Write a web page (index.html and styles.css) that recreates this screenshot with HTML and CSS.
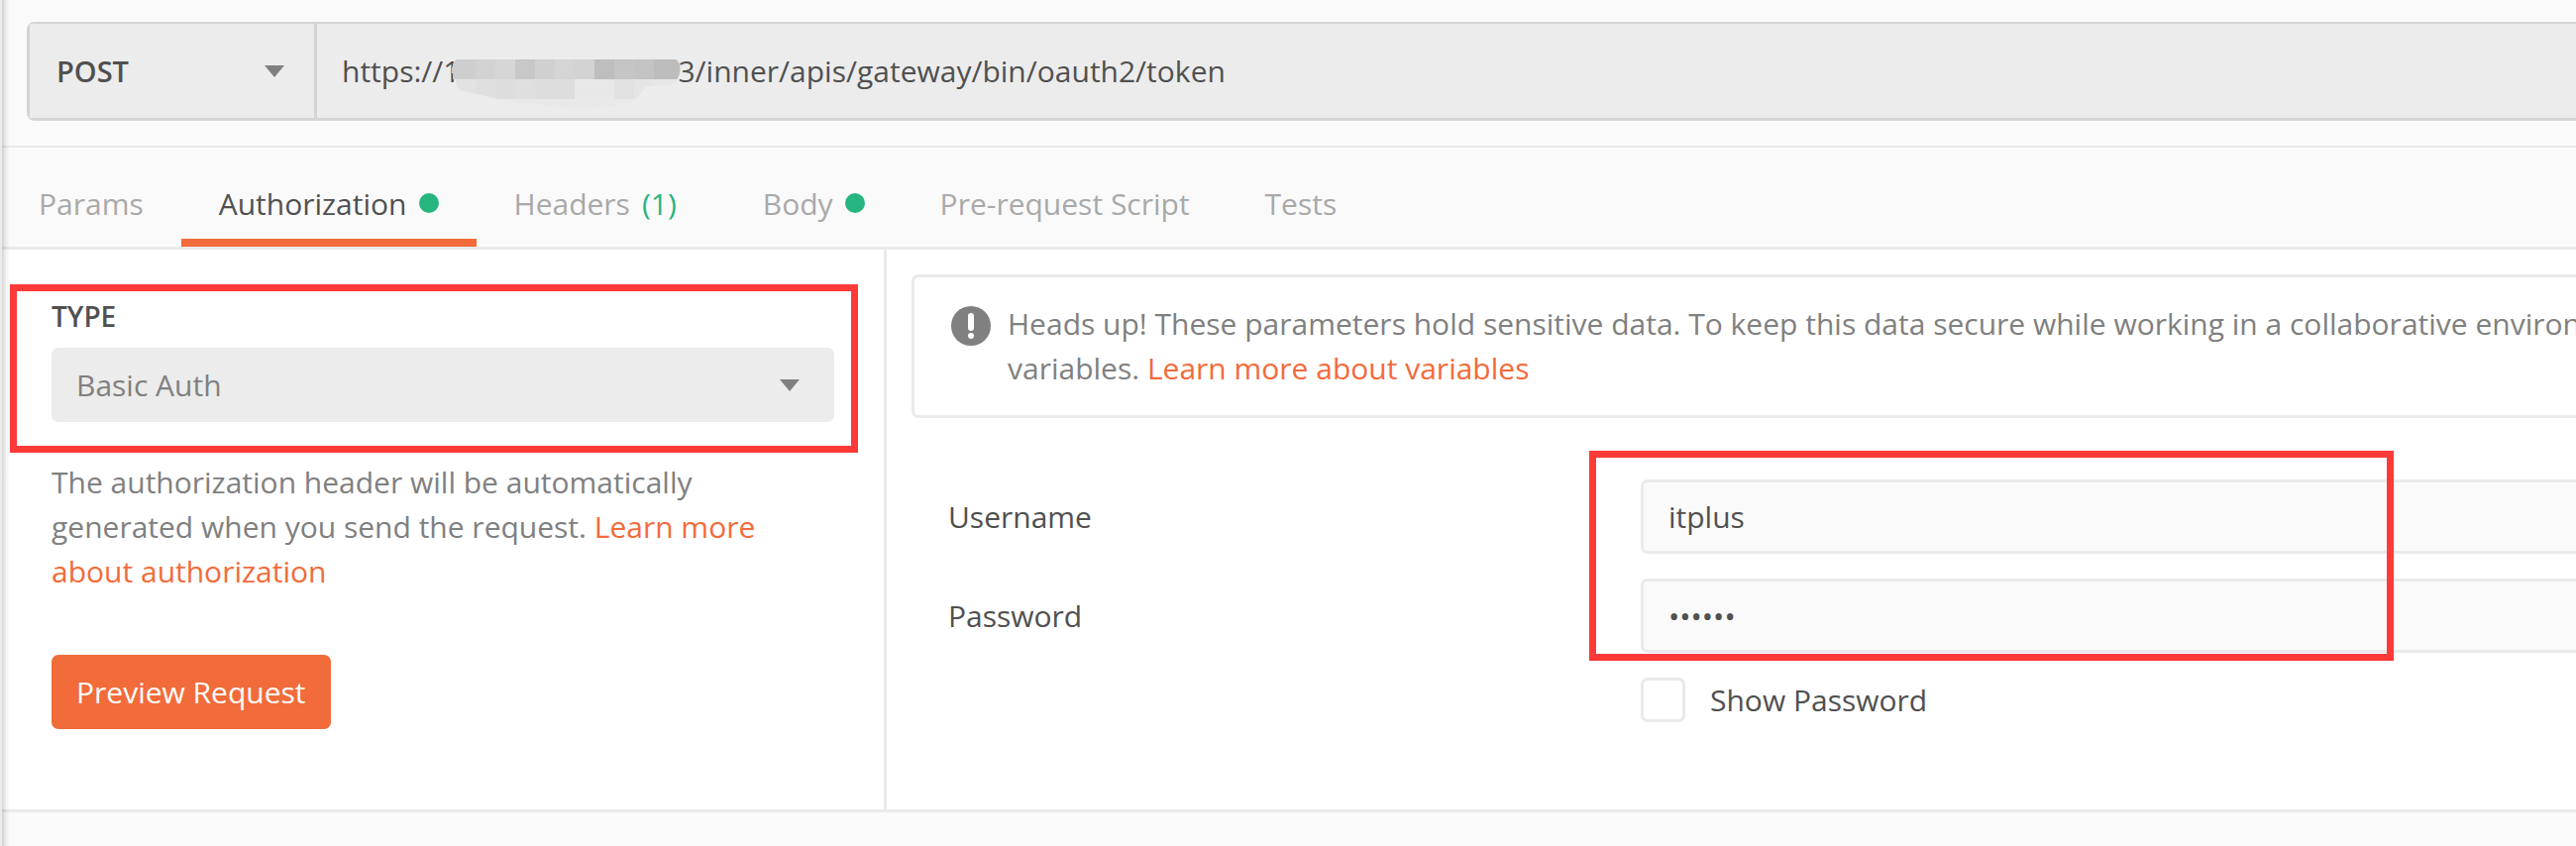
FILE: index.html
```html
<!DOCTYPE html>
<html lang="en">
<head>
<meta charset="utf-8">
<title>Request builder</title>
<link rel="stylesheet" href="styles.css">
</head>
<body>
<main class="workspace">
  <form class="url-bar">
    <div class="picker method">
      <select class="picker-select" aria-label="HTTP method"><option>POST</option></select>
      <svg class="caret" viewBox="0 0 20 12" aria-hidden="true"><path d="M0 0H20L10 12Z"/></svg>
    </div>
    <div class="url">
      <input class="url-input" type="text" aria-label="Request URL" value="https://1&emsp;&emsp;&emsp;&emsp;&emsp;&emsp;&emsp;&emsp13;3/inner/apis/gateway/bin/oauth2/token">
      <svg class="mosaic" viewBox="168 90 693 150" aria-hidden="true">
        <clipPath id="smudge"><path d="M182 90H846Q858 98 860 120Q856 150 840 162Q815 172 755 171Q735 205 715 215Q640 238 560 240Q490 240 440 225Q350 222 300 208L200 185Q180 178 180 150H172V132H168Q168 100 182 90Z"/></clipPath>
        <g clip-path="url(#smudge)" shape-rendering="crispEdges">
          <rect x="168" y="90" width="693" height="150" fill="#e9e9e9"/>
          <rect x="168" y="90" width="72" height="60" fill="#cecece"/>
          <rect x="240" y="90" width="60" height="60" fill="#d2d2d2"/>
          <rect x="300" y="90" width="60" height="60" fill="#d6d6d6"/>
          <rect x="360" y="90" width="60" height="60" fill="#c8c8c8"/>
          <rect x="420" y="90" width="60" height="60" fill="#d0d0d0"/>
          <rect x="480" y="90" width="60" height="60" fill="#d5d5d5"/>
          <rect x="540" y="90" width="60" height="60" fill="#d2d2d2"/>
          <rect x="600" y="90" width="60" height="60" fill="#bebebe"/>
          <rect x="660" y="90" width="60" height="60" fill="#c5c5c5"/>
          <rect x="720" y="90" width="60" height="60" fill="#c3c3c3"/>
          <rect x="780" y="90" width="81" height="60" fill="#bdbdbd"/>
          <rect x="168" y="150" width="72" height="60" fill="#e2e2e2"/>
          <rect x="240" y="150" width="60" height="60" fill="#dfdfdf"/>
          <rect x="300" y="150" width="60" height="60" fill="#dddddd"/>
          <rect x="360" y="150" width="60" height="60" fill="#dfdfdf"/>
          <rect x="420" y="150" width="120" height="60" fill="#dddddd"/>
          <rect x="540" y="150" width="120" height="60" fill="#e8e8e8"/>
          <rect x="660" y="150" width="60" height="60" fill="#e1e1e1"/>
          <rect x="720" y="150" width="60" height="60" fill="#e5e5e5"/>
          <rect x="780" y="150" width="81" height="60" fill="#e7e7e7"/>
        </g>
      </svg>
    </div>
  </form>

  <nav class="tabs">
    <a class="tab" href="#params">Params</a>
    <a class="tab tab-active" href="#authorization">Authorization <span class="dot"></span></a>
    <a class="tab tab-counted" href="#headers">Headers <span class="count">(1)</span></a>
    <a class="tab" href="#body">Body <span class="dot"></span></a>
    <a class="tab" href="#scripts">Pre-request Script</a>
    <a class="tab" href="#tests">Tests</a>
  </nav>

  <section class="panels">
    <div class="auth-type">
      <label class="type-label" for="auth-type">TYPE</label>
      <div class="picker type">
        <select class="picker-select" id="auth-type"><option>Basic Auth</option></select>
        <svg class="caret" viewBox="0 0 20 12" aria-hidden="true"><path d="M0 0H20L10 12Z"/></svg>
      </div>
      <p class="help">The authorization header will be automatically generated when you send the request. <a class="link" href="#learn-auth">Learn more about authorization</a></p>
      <button class="preview" type="button">Preview Request</button>
      <div class="marker marker-type"></div>
    </div>

    <div class="auth-form">
      <div class="notice">
        <svg class="notice-icon" viewBox="0 0 40 40" aria-hidden="true">
          <circle cx="20" cy="20" r="20" fill="#808080"/>
          <rect x="17" y="7" width="6" height="18" rx="3" fill="#fff"/>
          <circle cx="20" cy="30" r="3" fill="#fff"/>
        </svg>
        <p class="notice-text">Heads up! These parameters hold sensitive data. To keep this data secure while working in a collaborative environment<br>variables. <a class="link" href="#learn-variables">Learn more about variables</a></p>
      </div>
      <form class="fields">
        <label class="field-label" for="username">Username</label>
        <input class="field" id="username" type="text" value="itplus">
        <label class="field-label" for="password">Password</label>
        <input class="field" id="password" type="password" value="secret">
        <div class="show">
          <input class="check" id="show-password" type="checkbox">
          <label for="show-password">Show Password</label>
        </div>
        <div class="marker marker-fields"></div>
      </form>
    </div>
  </section>
</main>
<div class="edge"></div>
</body>
</html>
```
FILE: styles.css
```css
* {
  box-sizing: border-box;
}

body {
  margin: 0;
  overflow: hidden;
  background: #fafafa;
  color: #505050;
  font: 30px/45px "Open Sans", "Noto Sans", sans-serif;
}

p {
  margin: 0;
}

input,
select,
button {
  margin: 0;
  font: inherit;
  color: inherit;
}

.link {
  color: #f26b3a;
  text-decoration: none;
}

/* The request pane runs on beyond the right edge of the window. */
.workspace {
  width: calc(100% + 200px);
}

.edge {
  position: absolute;
  inset: 0 auto 0 0;
  width: 10px;
  background: linear-gradient(to right, rgba(0, 0, 0, 0.16), rgba(0, 0, 0, 0.04) 60%, transparent);
  border-left: 2px solid #ebebeb;
  background-clip: padding-box;
}

/* URL bar */
.url-bar {
  display: flex;
  height: 100px;
  margin: 22px 0 25px 27px;
  border: 3px solid #d4d4d4;
  border-top-width: 2px;
  border-radius: 8px;
  background: #ececec;
}

.picker {
  display: grid;
  align-items: center;
  background: #ececec;
}

.picker-select {
  grid-area: 1 / 1;
  width: 100%;
  height: 100%;
  appearance: none;
  border: 0;
  border-radius: 7px;
  background: none;
}

.caret {
  grid-area: 1 / 1;
  justify-self: end;
  width: 20px;
  height: 12px;
  fill: #808080;
  pointer-events: none;
}

.method {
  width: 290px;
  padding-right: 30px;
  border-right: 3px solid #d4d4d4;
}

.method .picker-select {
  padding: 0 27px;
  font-size: 29px;
  font-weight: 600;
}

.url {
  position: relative;
  flex: 1;
}

.url-input {
  width: 100%;
  height: 100%;
  padding: 0 25px;
  border: 0;
  background: none;
}

.mosaic {
  position: absolute;
  left: 136px;
  top: 36px;
  width: 231px;
  height: 50px;
}

/* Tabs */
.tabs {
  display: flex;
  height: 105px;
  padding-left: 1px;
  border-top: 2px solid #eaeaea;
  border-bottom: 3px solid #eaeaea;
}

.tab {
  display: flex;
  align-items: center;
  gap: 12px;
  padding: 20px 38px 0;
  border-bottom: 8px solid transparent;
  color: #a9a9a9;
  text-decoration: none;
}

.tab-active {
  border-color: #f26b3a;
  color: #505050;
}

.tab-counted {
  padding-right: 49px;
}

.count {
  color: #26b47f;
}

.dot {
  width: 20px;
  height: 20px;
  border-radius: 50%;
  background: #26b47f;
}

/* Panels */
.panels {
  display: flex;
  height: 568px;
  background: #fff;
  border-bottom: 3px solid #eaeaea;
}

.auth-type {
  position: relative;
  width: 895px;
  padding: 45px 50px 0 52px;
  border-right: 3px solid #eaeaea;
}

.type-label {
  display: block;
  margin-bottom: 9px;
  font-size: 28px;
  font-weight: 600;
}

.type {
  height: 75px;
  padding-right: 35px;
  border-radius: 7px;
  color: #808080;
}

.type .picker-select {
  padding: 0 25px;
}

.help {
  width: 740px;
  margin: 38px 0 62px;
  color: #808080;
}

.preview {
  height: 75px;
  padding: 0 25px;
  border: 0;
  border-radius: 7px;
  background: #f26b3a;
  color: #fff;
}

.auth-form {
  flex: 1;
  padding: 25px 25px 0;
}

.notice {
  display: flex;
  gap: 17px;
  height: 145px;
  padding: 24px 37px;
  border: 3px solid #eaeaea;
  border-radius: 7px;
  color: #808080;
}

.notice-icon {
  flex: none;
  width: 40px;
  height: 40px;
  margin-top: 5px;
}

.notice-text {
  white-space: nowrap;
}

.fields {
  position: relative;
  display: grid;
  grid-template-columns: 699px 1fr;
  row-gap: 25px;
  align-items: center;
  margin-top: 62px;
  padding-left: 37px;
}

.field {
  width: 100%;
  height: 75px;
  padding: 0 25px;
  border: 3px solid #eaeaea;
  border-radius: 7px;
  background: #fafafa;
}

.show {
  grid-column: 2;
  display: flex;
  align-items: center;
  gap: 25px;
}

.check {
  width: 45px;
  height: 45px;
  appearance: none;
  border: 3px solid #eaeaea;
  border-radius: 7px;
  background: #fff;
}

/* Red highlight frames drawn over the panels */
.marker {
  position: absolute;
  border: 7px solid #fc3a38;
  pointer-events: none;
}

.marker-type {
  left: 10px;
  top: 35px;
  width: 856px;
  height: 170px;
}

.marker-fields {
  left: 684px;
  top: -29px;
  width: 812px;
  height: 212px;
}
```
